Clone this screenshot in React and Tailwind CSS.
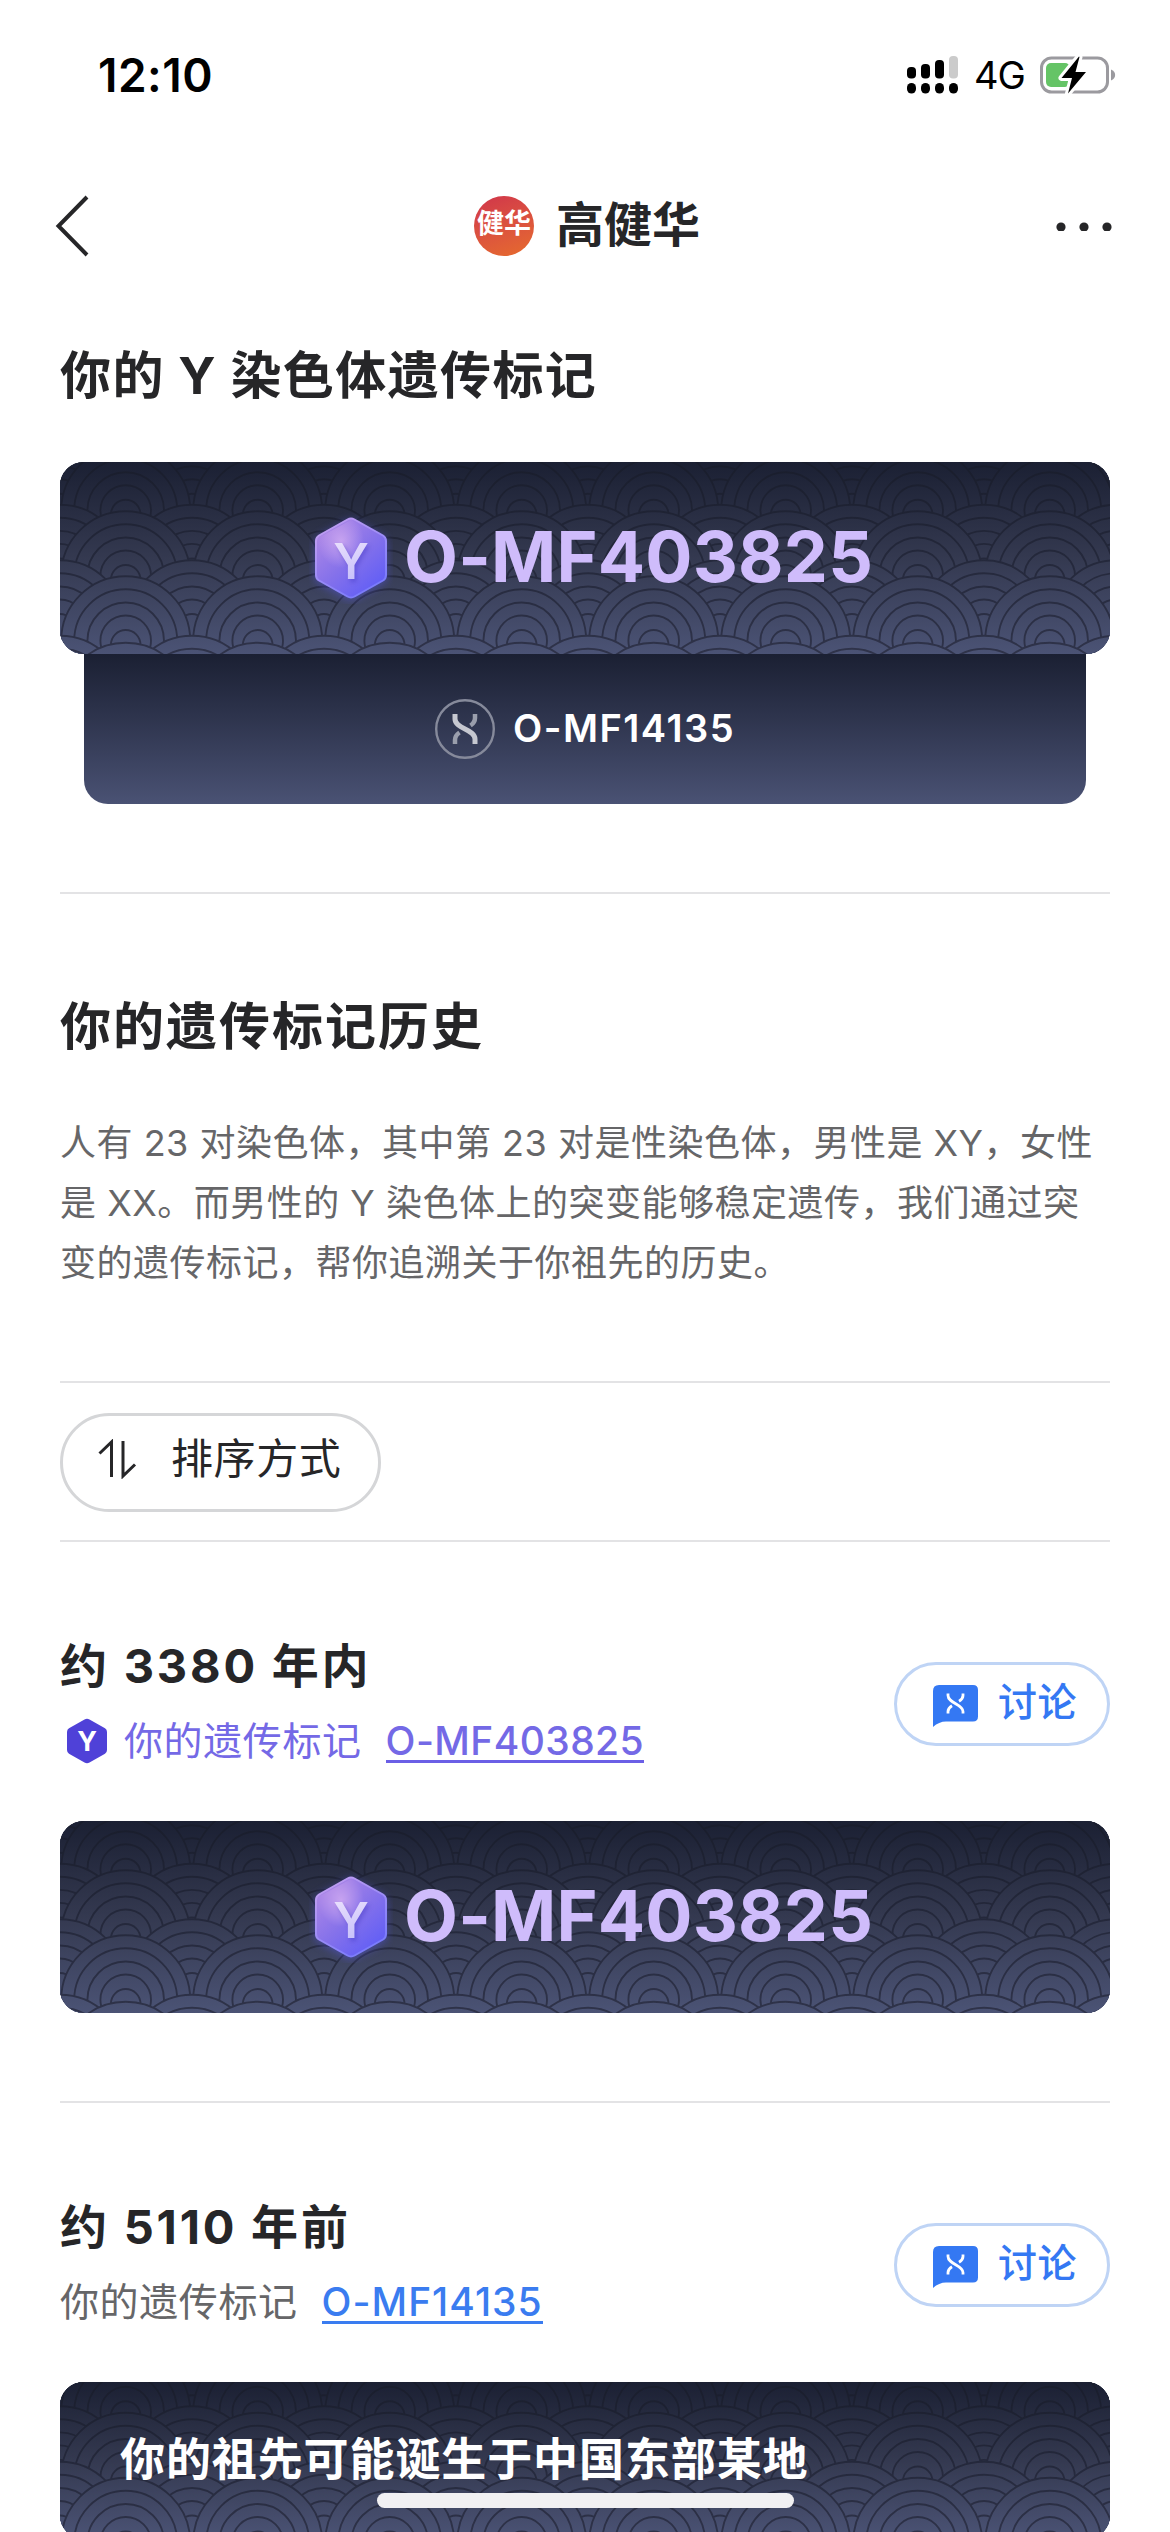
const RINGS = [64.5, 51.5, 38.3, 25.3];

// 海浪紋的每一排：offset 為錯開半格的排，y 為浪頂位置
const WAVE_ROWS = [
  { y: -22, offset: true },
  { y: -16, offset: false },
  { y: 42.7, offset: true },
  { y: 49.3, offset: false },
  { y: 98.3, offset: true },
  { y: 114.3, offset: false },
  { y: 173.7, offset: true },
  { y: 180.7, offset: false },
];

const MARKERS = [
  {
    id: 'a',
    title: '约 3380 年内',
    code: 'O-MF403825',
    highlight: true,
  },
  {
    id: 'b',
    title: '约 5110 年前',
    code: 'O-MF14135',
    highlight: false,
  },
];

/** 卡片背景的海浪紋 */
function WavePattern({ id, height, shift = 0 }) {
  return (
    <svg className="absolute inset-0 h-full w-full" viewBox={`0 0 1050 ${height}`} aria-hidden="true">
      <defs>
        <linearGradient id={id} gradientUnits="userSpaceOnUse" x1="0" y1="0" x2="0" y2={height}>
          <stop offset="0" stopColor="#1b2033" />
          <stop offset="0.5" stopColor="#343950" />
          <stop offset="1" stopColor="#4b5375" />
        </linearGradient>
        <linearGradient id={`${id}-line`} gradientUnits="userSpaceOnUse" x1="0" y1="0" x2="0" y2={height}>
          <stop offset="0" stopColor="#191d2c" />
          <stop offset="1" stopColor="#2f334a" />
        </linearGradient>
      </defs>
      <rect width="1050" height={height} fill={`url(#${id})`} />
      <g fill={`url(#${id})`} stroke={`url(#${id}-line)`} strokeWidth="1.9">
        {WAVE_ROWS.map((row) =>
          Array.from({ length: 9 }, (_, i) => {
            const cx = i * 132 + (row.offset ? 0 : 65.7);
            const cy = row.y + 64.5 - shift;
            return (
              <g key={`${row.y}-${i}`}>
                {RINGS.map((r) => (
                  <circle key={r} cx={cx} cy={cy} r={r} />
                ))}
                <circle cx={cx} cy={cy + 4} r="14.8" />
              </g>
            );
          })
        )}
      </g>
    </svg>
  );
}

function HexagonY({ id }) {
  return (
    <svg className="h-[92px] w-[84px] shrink-0" viewBox="-6 -6 84 92">
      <defs>
        <linearGradient id={`${id}-hex`} x1="0.1" y1="0" x2="0.9" y2="1">
          <stop offset="0" stopColor="#b48be6" />
          <stop offset="0.5" stopColor="#8672ea" />
          <stop offset="1" stopColor="#5a5af8" />
        </linearGradient>
        <radialGradient id={`${id}-shine`} cx="0.35" cy="0.28" r="0.35">
          <stop offset="0" stopColor="#e0b8f4" stopOpacity="0.65" />
          <stop offset="1" stopColor="#e0b8f4" stopOpacity="0" />
        </radialGradient>
        <linearGradient id={`${id}-edge`} x1="0" y1="0" x2="0.6" y2="1">
          <stop offset="0" stopColor="#c9a2f0" />
          <stop offset="1" stopColor="#7b7cfb" />
        </linearGradient>
        <linearGradient id={`${id}-y`} x1="0" y1="0" x2="0.2" y2="1">
          <stop offset="0" stopColor="#f1e6fd" />
          <stop offset="1" stopColor="#c3bdfa" />
        </linearGradient>
      </defs>
      <path
        d="M32.5 1.5Q36 -.5 39.5 1.5L68 17.5Q71 19.3 71 23V57Q71 60.7 68 62.500L39.500 78.500Q36 80.500 32.500 78.500L4 62.500Q1 60.700 1 57V23Q1 19.300 4 17.500Z"
        fill={`url(#${id}-hex)`}
        stroke={`url(#${id}-edge)`}
        strokeWidth="2"
        className="drop-shadow-[0_2px_4px_rgba(90,90,248,0.45)]"
      />
      <path
        d="M36 2L69 20V60L36 78L3 60V20Z"
        fill={`url(#${id}-shine)`}
      />
      <text
        x="36"
        y="61"
        textAnchor="middle"
        fill={`url(#${id}-y)`}
        className="font-['Inter'] text-[50px] font-semibold drop-shadow-[2px_3px_2px_rgba(60,50,190,0.4)]"
      >
        Y
      </text>
    </svg>
  );
}

/** 深色的遺傳標記卡片 */
function MarkerCard({ id }) {
  return (
    <div className="relative h-[192px] overflow-hidden rounded-[24px]">
      <WavePattern id={id} height={192} />
      <div className="relative flex h-full items-center pl-[249px]">
        <HexagonY id={id} />
        <span className="ml-[11px] pb-[2px] text-[70px] font-bold leading-none tracking-[0.2px] text-[#cfbcfb]">
          O-MF403825
        </span>
      </div>
    </div>
  );
}

function Divider({ className }) {
  return <div className={`h-[2px] bg-[#e3e3e5] ${className}`} />;
}

function StatusBar() {
  return (
    <div className="flex h-[132px] items-start justify-between pl-[98px] pr-[54px] pt-[48px] text-black">
      <div className="h-[54px] text-[46px] font-semibold leading-[54px] tracking-[0.5px]">12:10</div>
      <div className="flex h-[54px] items-center">
        <svg className="h-[38px] w-[52px]" viewBox="0 0 52 38">
          <rect x="0" y="11" width="9" height="11.500" rx="4" />
          <rect x="14" y="8" width="9" height="14.500" rx="4" />
          <rect x="28" y="4" width="9" height="18.500" rx="4" />
          <rect x="42" y="0" width="9" height="22.500" rx="4" fill="#cbcbcb" />
          <rect x="0" y="27" width="9" height="10.500" rx="4.500" />
          <rect x="14" y="27" width="9" height="10.500" rx="4.500" />
          <rect x="28" y="27" width="9" height="10.500" rx="4.500" />
          <rect x="42" y="27" width="9" height="10.500" rx="4.500" />
        </svg>
        <span className="ml-[15px] w-[51px] whitespace-nowrap text-[38px] leading-[54px] tracking-[-1px]">4G</span>
        <svg className="ml-[15px] h-[42px] w-[76px]" viewBox="0 0 76 42">
          <rect x="1.500" y="4" width="66" height="34" rx="10" fill="none" stroke="#9b9a9f" strokeWidth="3" />
          <rect x="6" y="9" width="24" height="24" rx="5" fill="#65c466" />
          <path d="M71 15.500C76.500 17.500 76.500 24.500 71 26.500Z" fill="#9b9a9f" />
          <path
            d="M39 2.500L21.500 24H32L28 39.500L46 18H35.500L39.500 3Z"
            fill="#000"
            stroke="#fff"
            strokeWidth="6"
            strokeLinejoin="round"
            paintOrder="stroke"
          />
        </svg>
      </div>
    </div>
  );
}

function NavBar() {
  return (
    <div className="flex h-[188px] items-center justify-between pl-[54px] pr-[58px]">
      <svg className="h-[64px] w-[64px]" viewBox="0 0 64 64" fill="none" stroke="#262628" strokeWidth="4">
        <path d="M33 3L4.500 32L33 61" />
      </svg>
      <div className="flex items-center">
        <div className="flex h-[60px] w-[60px] items-center justify-center rounded-full bg-linear-160 from-[#d0344a] to-[#e66b2b]">
          <span className="whitespace-nowrap pb-[4px] text-[27px] font-bold leading-[40px] text-white">健华</span>
        </div>
        <h1 className="ml-[22px] pb-[3px] text-[48px] font-bold leading-[60px] text-[#262628]">高健华</h1>
      </div>
      <svg className="h-[10px] w-[56px]" viewBox="0 0 56 10" fill="#262628">
        <circle cx="5" cy="6" r="4.600" />
        <circle cx="28" cy="6" r="4.600" />
        <circle cx="51" cy="6" r="4.600" />
      </svg>
    </div>
  );
}

function DiscussButton() {
  return (
    <button className="mt-[7px] flex h-[84px] w-[216px] items-center rounded-full border-[3px] border-[#bfd4f5] pl-[36px] text-[#3478f3]">
      <svg className="mt-[5px] h-[44px] w-[45px]" viewBox="0 0 45 44">
        <path
          d="M6 0H40Q45 0 45 5V31.500Q45 36.500 40 36.500H13Q6 36.500 0 42V6Q0 0 6 0Z"
          fill="currentColor"
        />
        <g fill="none" stroke="#fff" strokeWidth="2.800">
          <path d="M15 8.500v2c0 7.500 15 9 15 16v2" />
          <path d="M30 8.500v2c0 2.500-1.500 4.200-4 5.700" />
          <path d="M15 28.500v-2c0-2.500 1.500-4.200 4-5.700" />
        </g>
      </svg>
      <span className="ml-[20px] pb-[4px] text-[39px] font-medium leading-[60px] tracking-[0.6px]">讨论</span>
    </button>
  );
}

function MarkerHeader({ marker }) {
  return (
    <div className="flex items-center justify-between">
      <div>
        <h2 className="h-[72px] whitespace-nowrap text-[47px] font-bold leading-[72px] tracking-[2.8px] text-[#262628]">
          {marker.title}
        </h2>
        <div className="mt-[9px] flex h-[60px] items-center whitespace-nowrap text-[39px] leading-[60px]">
          {marker.highlight && (
            <svg className="ml-[6px] mr-[16px] h-[46px] w-[42px]" viewBox="0 0 42 46">
              <path
                d="M18.500 1.500Q21 0 23.500 1.500L39 10.300Q41 11.500 41 14V32Q41 34.500 39 35.700L23.500 44.500Q21 46 18.500 44.500L3 35.700Q1 34.500 1 32V14Q1 11.500 3 10.300Z"
                fill="#4f41d8"
              />
              <text x="21" y="33" textAnchor="middle" fill="#fff" className="font-['Inter'] text-[27px] font-bold">
                Y
              </text>
            </svg>
          )}
          <span className={marker.highlight ? 'tracking-[0.6px] text-[#7469e6]' : 'tracking-[0.6px] text-[#666668]'}>
            你的遗传标记
          </span>
          <a
            className={
              marker.highlight
                ? 'ml-[24px] h-[43px] border-b-[3px] border-[#6b5fe6] font-medium leading-[42px] tracking-[0.4px] text-[#7469e6]'
                : 'ml-[24px] h-[43px] border-b-[3px] border-[#3a7cf0] font-medium leading-[42px] tracking-[1px] text-[#3a7cf0]'
            }
          >
            {marker.code}
          </a>
        </div>
      </div>
      <DiscussButton />
    </div>
  );
}

export default function App() {
  return (
    <div
      lang="zh-CN"
      className="relative h-[2532px] w-[1170px] overflow-hidden bg-white font-['Inter','Noto_Sans_CJK_SC',sans-serif]"
    >
      <StatusBar />
      <NavBar />

      <main className="px-[60px]">
        <h2 className="h-[110px] text-[51px] font-bold leading-[112px] tracking-[1.4px] text-[#262628]">
          你的 Y 染色体遗传标记
        </h2>

        <div className="mt-[32px]">
          <MarkerCard id="main" />
          <div className="mx-[24px] flex h-[150px] items-center rounded-b-[24px] bg-linear-to-b from-[#1b2033] to-[#4a5274] pl-[351px]">
            <svg className="h-[60px] w-[60px]" viewBox="0 0 60 60" fill="none">
              <circle cx="30" cy="30" r="28.800" stroke="#868a9b" strokeWidth="2.400" />
              <path d="M20 15v5c0 10 20 10 20 20v5" stroke="#c6c8d0" strokeWidth="5" />
              <path d="M40 15v4c0 3.500-1.500 5.500-4.500 7.500" stroke="#9a9eac" strokeWidth="4.500" />
              <path d="M20 45v-4c0-3.500 1.500-5.500 4.500-7.500" stroke="#9a9eac" strokeWidth="4.500" />
            </svg>
            <span className="ml-[18px] pb-[3px] text-[38px] font-semibold leading-none tracking-[1.5px] text-white">
              O-MF14135
            </span>
          </div>
        </div>

        <Divider className="mt-[88px]" />

        <h2 className="mt-[94px] h-[76px] text-[51px] font-bold leading-[78px] tracking-[2px] text-[#262628]">
          你的遗传标记历史
        </h2>
        <p className="mt-[49px] h-[180px] whitespace-nowrap text-[36px] leading-[60px] tracking-[0.5px] text-[#666668]">
          人有 23 对染色体，其中第 23 对是性染色体，男性是 XY，女性
          <br />
          是 XX。而男性的 Y 染色体上的突变能够稳定遗传，我们通过突
          <br />
          变的遗传标记，帮你追溯关于你祖先的历史。
        </p>

        <Divider className="mt-[88px]" />
        <button className="mt-[30px] flex h-[99px] w-[321px] items-center rounded-full border-[3px] border-[#d5d6d8] pl-[34px] text-[#262628]">
          <svg className="mb-[8px] h-[40px] w-[40px]" viewBox="0 0 40 40" fill="none" stroke="currentColor" strokeWidth="3">
            <path d="M2.500 14.500L14.500 3V38" />
            <path d="M26 2V37L38 25.500" />
          </svg>
          <span className="ml-[34px] pb-[8px] text-[42px] leading-[60px] tracking-[0.6px]">排序方式</span>
        </button>
        <Divider className="mt-[28px]" />

        <section className="pt-[88px]">
          <MarkerHeader marker={MARKERS[0]} />
          <div className="mt-[50px]">
            <MarkerCard id="recent" />
          </div>
        </section>

        <Divider className="mt-[88px]" />

        <section className="pt-[88px]">
          <MarkerHeader marker={MARKERS[1]} />
          <div className="relative mt-[50px] h-[157px] overflow-hidden rounded-[24px]">
            <WavePattern id="origin" height={157} shift={18.5} />
            <p className="relative pl-[60px] pt-[45px] text-[45px] font-bold leading-[66px] tracking-[0.9px] text-white">
              你的祖先可能诞生于中国东部某地
            </p>
          </div>
        </section>
      </main>

      {/* iOS 底部指示條 */}
      <div className="absolute bottom-[24px] left-[377px] h-[15px] w-[417px] rounded-full bg-[#f1f0f2]" />
    </div>
  );
}
